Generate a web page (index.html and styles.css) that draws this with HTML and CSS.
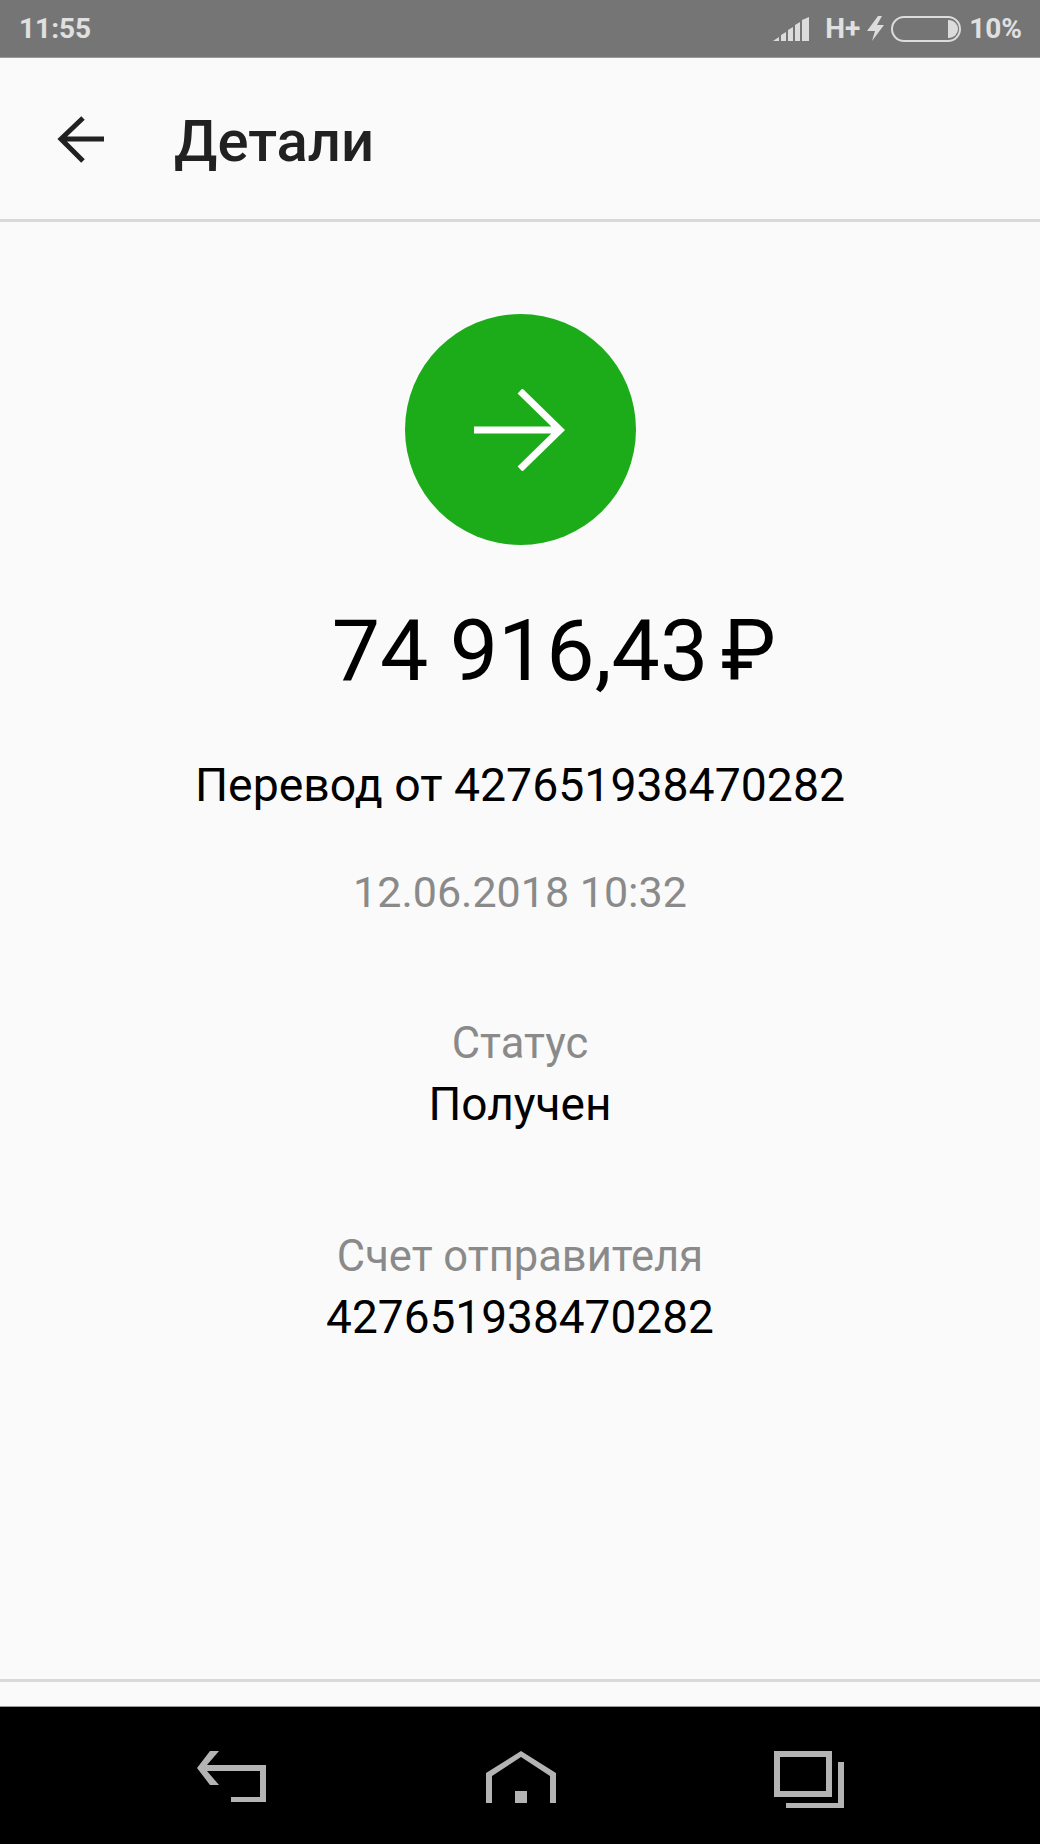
FILE: index.html
```html
<!DOCTYPE html>
<html lang="ru">
<head>
    <meta charset="UTF-8">
    <title>Детали</title>
    <link rel="stylesheet" href="styles.css">
</head>
<body>
    <div class="status-bar">
        <span class="time">11:55</span>
        <div class="status-icons">
            <svg class="signal" width="36" height="24" viewBox="0 0 36 24">
                <path d="M0 24L6 20V24ZM8 18L13 15V24H8ZM15 13L20 10V24H15ZM22 8L27 5V24H22ZM29 3L36 0V24H29Z" fill="#dcdcdc"/>
            </svg>
            <span class="network">H+</span>
            <svg class="bolt" width="17" height="25" viewBox="0 0 17 25">
                <path d="M11 0H15L10 9H17L5 25L8 15H0Z" fill="#dcdcdc"/>
            </svg>
            <svg class="battery" width="70" height="26" viewBox="0 0 70 26">
                <rect x="1" y="1" width="68" height="24" rx="12" fill="none" stroke="#dcdcdc" stroke-width="2"/>
                <path d="M57 4H58A9 9 0 0 1 58 22H57Z" fill="#dcdcdc"/>
            </svg>
            <span class="battery-level">10%</span>
        </div>
    </div>

    <div class="app-bar">
        <svg class="back" width="48" height="48" viewBox="0 0 48 48">
            <path d="M47 24H4M26 3L4 24L26 46" fill="none" stroke="#212121" stroke-width="5"/>
        </svg>
        <h1 class="title">Детали</h1>
    </div>

    <div class="details">
        <div class="circle">
            <svg width="92" height="82" viewBox="0 0 92 82">
                <path d="M0 41H84M46 2L86 41L46 80" fill="none" stroke="#fff" stroke-width="7"/>
            </svg>
        </div>
        <div class="amount">74 916,43<span class="currency">₽</span></div>
        <div class="subject">Перевод от 427651938470282</div>
        <div class="date">12.06.2018 10:32</div>

        <div class="field">
            <div class="label">Статус</div>
            <div class="value">Получен</div>
        </div>
        <div class="field">
            <div class="label">Счет отправителя</div>
            <div class="value">427651938470282</div>
        </div>
    </div>

    <div class="bottom-strip"></div>

    <div class="nav-bar">
        <svg width="70" height="52" viewBox="0 0 70 52">
            <path d="M0 17L13 0H22L10 14H69V51H34V46H63V20H10L22 34H13Z" fill="#b4b4b4"/>
        </svg>
        <svg width="70" height="52" viewBox="0 0 70 52">
            <path d="M35 0L70 22V52H64V25L35 6L6 25V52H0V22Z" fill="#b4b4b4"/>
            <rect x="29" y="40" width="12" height="12" fill="#b4b4b4"/>
        </svg>
        <svg width="70" height="57" viewBox="0 0 70 57">
            <rect x="3" y="3" width="52" height="40" fill="none" stroke="#b4b4b4" stroke-width="6"/>
            <path d="M64 11H70V57H12V52H64Z" fill="#b4b4b4"/>
        </svg>
    </div>
</body>
</html>
```

FILE: styles.css
```css
* {
    box-sizing: border-box;
}

body {
    font-family: Roboto, "Noto Sans", sans-serif;
    background-color: #fafafa;
    color: #000;
    margin: 0;
    height: 1844px;
    display: flex;
    flex-direction: column;
    overflow: hidden;
}

.status-bar {
    height: 58px;
    flex: none;
    background-color: #757575;
    border-bottom: 1px solid #9a9a9a;
    color: #e0e0e0;
    font-size: 28px;
    font-weight: 700;
    display: flex;
    justify-content: space-between;
    align-items: center;
    padding: 0 18px 0 19px;
}

.status-icons {
    display: flex;
    align-items: center;
}

.signal {
    margin-right: 16px;
}

.bolt {
    margin: 0 7px 0 7px;
}

.battery {
    margin-right: 8px;
}

.app-bar {
    height: 164px;
    flex: none;
    border-bottom: 3px solid #d9d9d9;
    display: flex;
    align-items: center;
    padding-left: 57px;
}

.back {
    margin-right: 69px;
}

.title {
    margin: 0;
    padding-top: 4px;
    font-size: 58px;
    font-weight: 500;
    color: #212121;
}

.details {
    flex: 1;
    border-bottom: 3px solid #d9d9d9;
    display: flex;
    flex-direction: column;
    align-items: center;
    padding-top: 92px;
}

.circle {
    width: 231px;
    height: 231px;
    border-radius: 50%;
    background-color: #1cac1a;
    display: flex;
    justify-content: center;
    align-items: center;
}

.amount {
    font-size: 86px;
    line-height: 104px;
    margin-top: 54px;
    padding-left: 70px;
}

.currency {
    display: inline-block;
    margin-left: 13px;
    transform: scaleX(0.96);
    transform-origin: left;
}

.subject {
    font-size: 46.4px;
    line-height: 52px;
    margin-top: 56px;
}

.date {
    font-size: 43px;
    line-height: 48px;
    color: #8a8a8a;
    margin-top: 57px;
}

.field {
    text-align: center;
    margin-top: 97px;
    line-height: 61px;
}

.field + .field {
    margin-top: 91px;
}

.label {
    font-size: 43.5px;
    color: #8a8a8a;
}

.value {
    font-size: 46px;
}

.bottom-strip {
    height: 25px;
    flex: none;
    border-bottom: 1px solid #9a9a9a;
}

.nav-bar {
    height: 137px;
    flex: none;
    background-color: #000;
    display: flex;
    justify-content: space-between;
    align-items: flex-start;
    padding: 44px 196px 0 197px;
}
```
